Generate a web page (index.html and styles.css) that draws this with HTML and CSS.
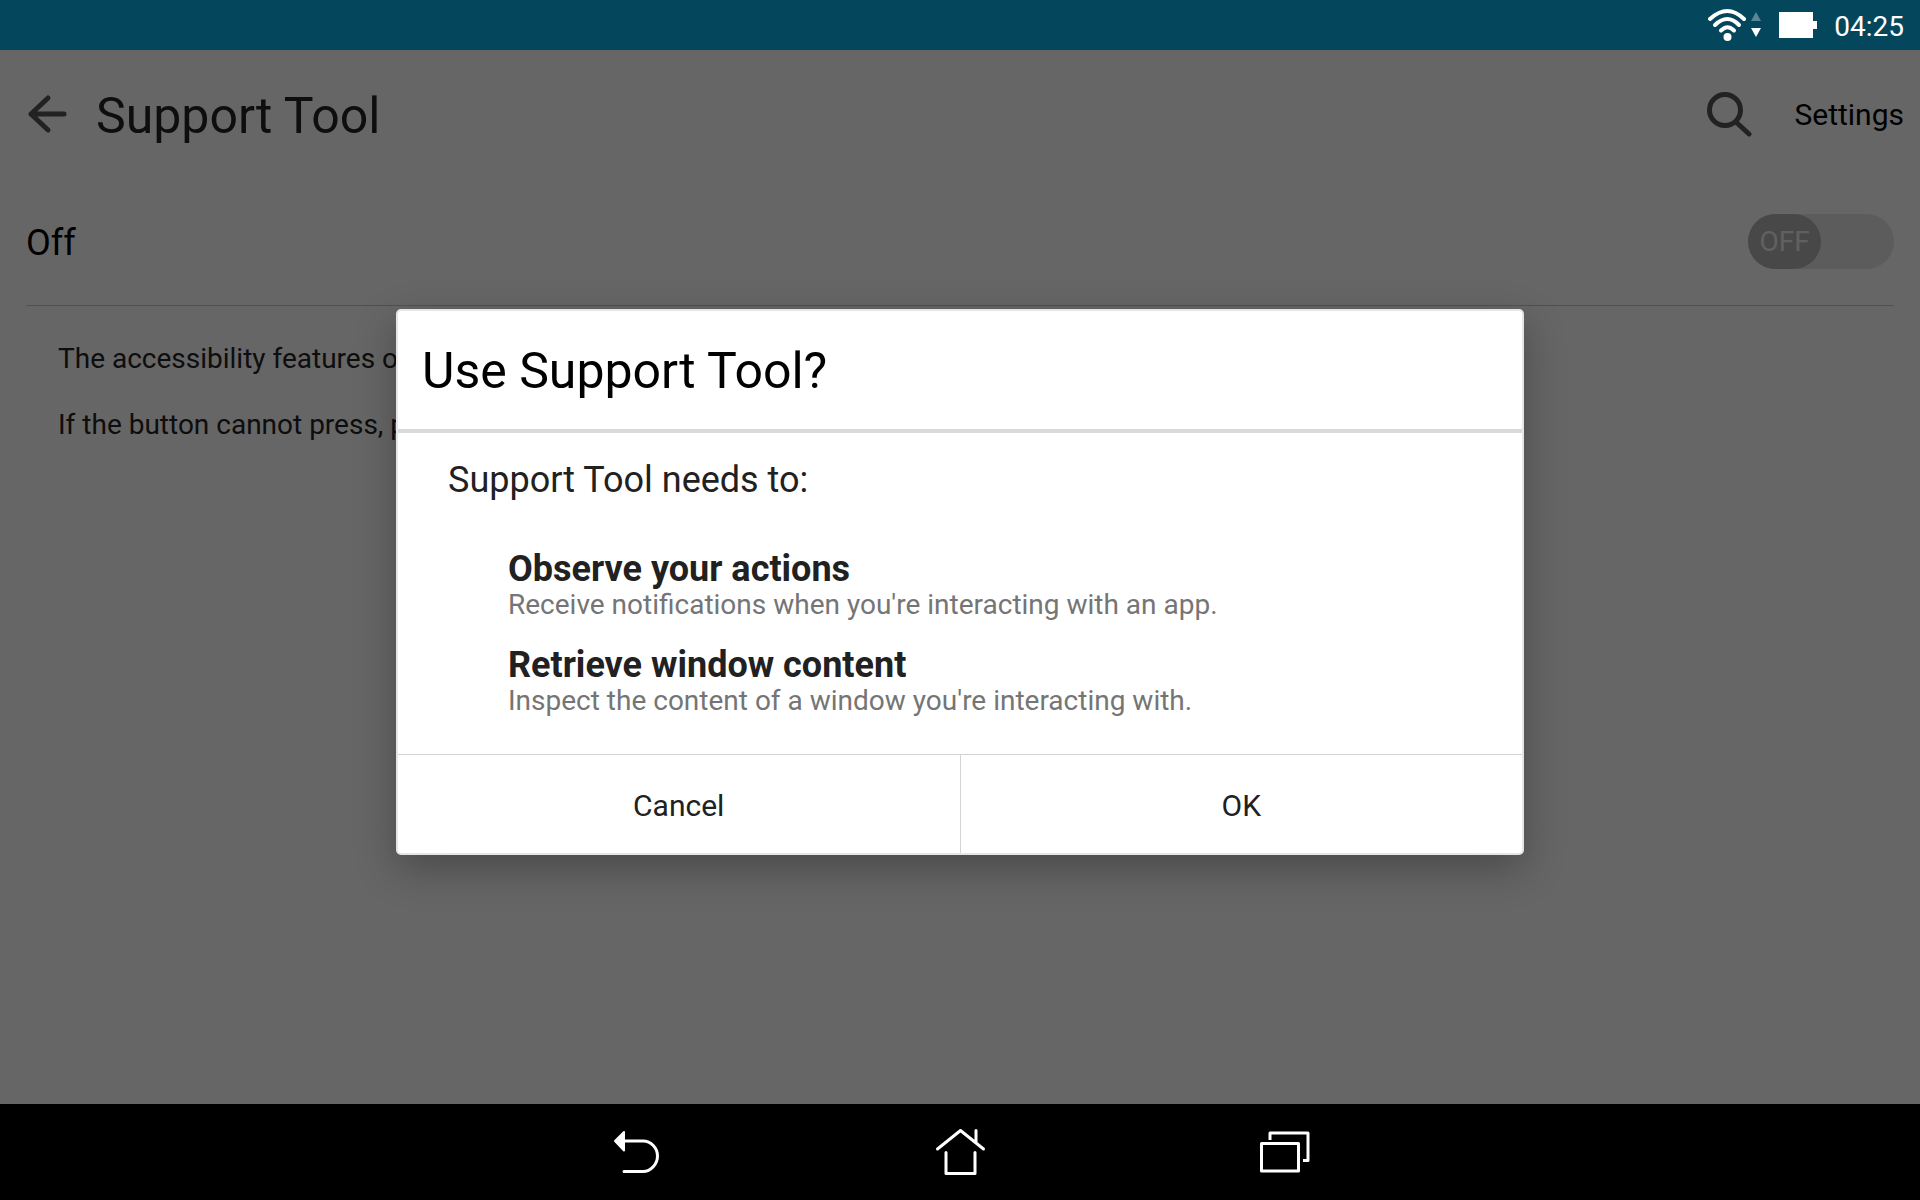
FILE: index.html
```html
<!DOCTYPE html>
<html lang="en">
  <head>
    <meta charset="UTF-8" />
    <meta name="viewport" content="width=device-width, initial-scale=1.0" />
    <title>Support Tool</title>
    <link rel="stylesheet" href="styles.css">
  </head>
  <body>
    <div class="statusbar">
      <svg class="wifi" viewBox="0 0 54 34" width="54" height="34">
        <g fill="none" stroke="#fff" stroke-width="4" stroke-linecap="round">
          <path d="M3 11 Q20.500 -5 37 11" />
          <path d="M8 17 Q20.500 5 32 17" />
          <path d="M14 22.500 Q20.500 16 27 22.500" />
        </g>
        <circle cx="20.500" cy="29" r="4" fill="#fff" />
        <path d="M44 13 L49 4 L54 13 Z" fill="#5a8696" />
        <path d="M44 20 L54 20 L49 29 Z" fill="#fff" />
      </svg>
      <svg class="battery" viewBox="0 0 38 26" width="38" height="26">
        <path d="M0 0 H34 V9 H38 V17 H34 V26 H0 Z" fill="#fff" />
      </svg>
      <span class="time">04:25</span>
    </div>

    <div class="screen">
      <div class="header">
        <button class="icon-btn" aria-label="Back">
          <svg viewBox="0 0 40 40" width="40" height="40" fill="none" stroke="#555" stroke-width="5" stroke-linecap="round" stroke-linejoin="round">
            <path d="M37 20 H4 M21 4 L4 20 L21 36" />
          </svg>
        </button>
        <h1>Support Tool</h1>
        <button class="icon-btn" aria-label="Search">
          <svg viewBox="0 0 46 46" width="46" height="46" fill="none" stroke="#555" stroke-width="5" stroke-linecap="round">
            <circle cx="19" cy="19" r="15.500" />
            <path d="M30 31 L43 43" />
          </svg>
        </button>
        <button class="settings">Settings</button>
      </div>
      <div class="switch-row">
        <label for="service">Off</label>
        <div class="switch">
          <input type="checkbox" id="service">
          <span class="knob">OFF</span>
        </div>
      </div>
      <div class="description">
        <p>The accessibility features o</p>
        <p>If the button cannot press, p</p>
      </div>

      <div class="scrim">
        <div class="dialog" role="dialog" aria-labelledby="dialog-title">
          <h2 id="dialog-title">Use Support Tool?</h2>
          <div class="dialog-body">
            <p class="needs">Support Tool needs to:</p>
            <ul>
              <li>
                <h3>Observe your actions</h3>
                <p>Receive notifications when you're interacting with an app.</p>
              </li>
              <li>
                <h3>Retrieve window content</h3>
                <p>Inspect the content of a window you're interacting with.</p>
              </li>
            </ul>
          </div>
          <div class="dialog-buttons">
            <button>Cancel</button>
            <button>OK</button>
          </div>
        </div>
      </div>
    </div>

    <div class="navbar">
      <button aria-label="Back">
        <svg viewBox="-1 4 96 96" width="96" height="96" fill="none" stroke="#fff" stroke-width="3" stroke-linecap="round" stroke-linejoin="round">
          <path d="M34 41 H53 C61 41 67.500 48 67.500 56 C67.500 64 61 71.500 53 71.500 H34" />
          <path d="M25 41 L34 32 V50.500 Z" fill="#fff" stroke-width="2" />
        </svg>
      </button>
      <button aria-label="Home">
        <svg viewBox="2 4 96 96" width="96" height="96" fill="none" stroke="#fff" stroke-width="3" stroke-linecap="round" stroke-linejoin="round">
          <path d="M27.500 49 L50.500 30.500 L73.500 49 M66 42 V30.500" />
          <path d="M36 52.500 V73.500 H65 V52.500" />
        </svg>
      </button>
      <button aria-label="Recent apps">
        <svg viewBox="-5 4 96 96" width="96" height="96" fill="none" stroke="#fff" stroke-width="3" stroke-linejoin="round">
          <path d="M21.500 43.500 H58.500 V71 H21.500 Z" />
          <path d="M30 40 V33 H68 V60.500 H63" />
        </svg>
      </button>
    </div>
  </body>
</html>
```

FILE: styles.css
```css
* {
  box-sizing: border-box;
}
body {
  margin: 0;
  height: 100vh;
  display: flex;
  flex-direction: column;
  font-family: Roboto, sans-serif;
  font-size: 28px;
  line-height: 33px;
}
h1, h2, h3, p, ul {
  margin: 0;
  padding: 0;
  font-weight: 400;
}
button {
  border: 0;
  padding: 0;
  background: none;
  font-family: inherit;
  color: inherit;
}
svg {
  display: block;
}

/* status bar */
.statusbar {
  height: 50px;
  padding-right: 16px;
  display: flex;
  justify-content: flex-end;
  align-items: center;
  background-color: #04475d;
  color: white;
}
.battery {
  margin: 0 17px 0 18px;
}
.time {
  padding-top: 2px;
}

/* settings page */
.screen {
  flex: 1;
  position: relative;
  background-color: white;
}
.header {
  height: 128px;
  padding: 0 16px 0 27px;
  display: flex;
  align-items: center;
}
.header h1 {
  flex: 1;
  padding: 4px 0 0 29px;
  font-size: 50px;
  line-height: 58px;
  color: #252525;
}
.settings {
  margin-left: 42px;
  font-size: 30px;
}
.switch-row {
  height: 128px;
  margin: 0 26px;
  display: flex;
  justify-content: space-between;
  align-items: center;
  border-bottom: 1px solid #c8c8c8;
  font-size: 36px;
}
.switch-row label {
  padding-top: 4px;
}
.switch {
  position: relative;
  width: 146px;
  height: 55px;
}
.switch input {
  appearance: none;
  display: block;
  width: 100%;
  height: 100%;
  margin: 0;
  border-radius: 28px;
  background-color: #e6e6e6;
}
.knob {
  position: absolute;
  top: 0;
  left: 0;
  width: 73px;
  height: 55px;
  border-radius: 28px;
  background-color: #b4b4b4;
  color: #f0f0f0;
  font-size: 28px;
  line-height: 55px;
  text-align: center;
  pointer-events: none;
}
.switch input:checked + .knob {
  left: 73px;
}
.description {
  padding: 36px 58px;
  color: #252525;
}
.description p {
  margin-bottom: 33px;
}

/* dialog */
.scrim {
  position: absolute;
  inset: 0;
  padding-top: 10px;
  display: flex;
  justify-content: center;
  align-items: center;
  background-color: rgba(0, 0, 0, 0.6);
}
.dialog {
  width: 90%;
  max-width: 1128px;
  border: 2px solid #e6e6e6;
  border-radius: 5px;
  background-color: white;
  box-shadow: 0 14px 40px rgba(0, 0, 0, 0.28);
  color: #212121;
}
.dialog h2 {
  padding: 31px 24px 29px;
  border-bottom: 4px solid #dadada;
  font-size: 50px;
  line-height: 58px;
  color: black;
}
.dialog-body {
  padding: 26px 50px 37px;
}
.needs {
  font-size: 36px;
  line-height: 42px;
}
.dialog-body ul {
  margin-top: 49px;
  padding-left: 60px;
  display: flex;
  flex-direction: column;
  gap: 25px;
  list-style: none;
}
.dialog-body h3 {
  font-size: 36px;
  line-height: 38px;
  font-weight: 700;
}
.dialog-body li p {
  color: #757575;
}
.dialog-buttons {
  display: flex;
  border-top: 1px solid #d4d4d4;
}
.dialog-buttons button {
  flex: 1;
  height: 98px;
  padding-top: 2px;
  font-size: 30px;
}
.dialog-buttons button + button {
  border-left: 1px solid #d4d4d4;
}

/* navigation bar */
.navbar {
  height: 96px;
  display: flex;
  justify-content: center;
  background-color: black;
}
.navbar button {
  width: 323px;
  display: flex;
  justify-content: center;
}
```
